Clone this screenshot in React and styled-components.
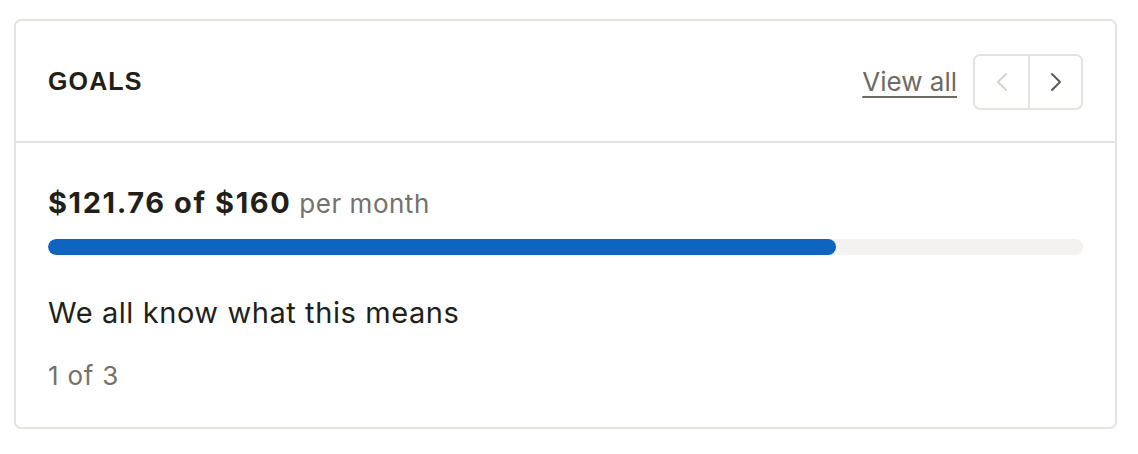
import React from "react";
import styled, { createGlobalStyle } from "styled-components";

const Global = createGlobalStyle`
  html, body { margin: 0; padding: 0; background: #ffffff; }
  body { font-family: Inter, "Noto Sans", sans-serif; color: #221f1a; }
`;

const Page = styled.div`
  padding: 19px 21px 26px 14px;
`;

const Card = styled.section`
  border: 2px solid #e4e3de;
  border-radius: 7px;
  background: #fff;
`;

const Header = styled.header`
  display: flex;
  align-items: center;
  justify-content: space-between;
  height: 120px;
  padding: 0 32px;
  border-bottom: 2px solid #e4e3de;
`;

const Title = styled.h2`
  margin: 0;
  font-family: "Liberation Sans", Arial, sans-serif;
  font-weight: 700;
  font-size: 25px;
  letter-spacing: 0.045em;
  color: #221f1a;
`;

const Actions = styled.div`
  display: flex;
  align-items: center;
  gap: 16px;
`;

const ViewAll = styled.a`
  font-size: 26px;
  color: #6e6a62;
  text-decoration: underline;
  text-decoration-thickness: 2px;
  text-underline-offset: 5px;
  cursor: pointer;
`;

const Pager = styled.div`
  display: flex;
  border: 2px solid #e4e3de;
  border-radius: 7px;
  height: 56px;
  box-sizing: border-box;
  margin-top: 1px;
`;

const PagerButton = styled.button`
  width: 53px;
  display: flex;
  align-items: center;
  justify-content: center;
  background: none;
  border: none;
  padding: 0;
  color: ${(p) => (p.$disabled ? "#d6d4cf" : "#5f5b54")};
  & + & {
    border-left: 2px solid #e4e3de;
  }
`;

const Body = styled.div`
  padding: 42px 32px 36px;
`;

const Amount = styled.div`
  display: flex;
  align-items: baseline;
  gap: 8px;
`;

const Strong = styled.span`
  font-size: 29px;
  font-weight: 700;
  letter-spacing: 0.055em;
  color: #221f1a;
`;

const Muted = styled.span`
  font-size: 26px;
  letter-spacing: 0.02em;
  color: #75716a;
`;

const Track = styled.div`
  margin-top: 19px;
  height: 16px;
  border-radius: 8px;
  background: #f3f2f0;
  overflow: hidden;
`;

const Fill = styled.div`
  height: 100%;
  border-radius: 8px;
  background: #0f63c1;
`;

const Description = styled.p`
  margin: 40px 0 0;
  font-size: 29px;
  letter-spacing: 0.02em;
  color: #221f1a;
`;

const Counter = styled.p`
  margin: 30px 0 0;
  font-size: 26px;
  letter-spacing: 0.03em;
  color: #75716a;
`;

const Chevron = ({ dir }) => (
  <svg width="12" height="20" viewBox="0 0 12 20" fill="none">
    <polyline
      points={dir === "left" ? "10,2 2,10 10,18" : "2,2 10,10 2,18"}
      stroke="currentColor"
      strokeWidth="2"
      strokeLinecap="round"
      strokeLinejoin="round"
    />
  </svg>
);

export default function App() {
  const pct = (121.76 / 160) * 100;
  return (
    <Page>
      <Global />
      <Card>
        <Header>
          <Title>GOALS</Title>
          <Actions>
            <ViewAll>View all</ViewAll>
            <Pager>
              <PagerButton $disabled aria-label="Previous">
                <Chevron dir="left" />
              </PagerButton>
              <PagerButton aria-label="Next">
                <Chevron dir="right" />
              </PagerButton>
            </Pager>
          </Actions>
        </Header>
        <Body>
          <Amount>
            <Strong>$121.76 of $160</Strong>
            <Muted>per month</Muted>
          </Amount>
          <Track>
            <Fill style={{ width: `${pct}%` }} />
          </Track>
          <Description>We all know what this means</Description>
          <Counter>1 of 3</Counter>
        </Body>
      </Card>
    </Page>
  );
}
